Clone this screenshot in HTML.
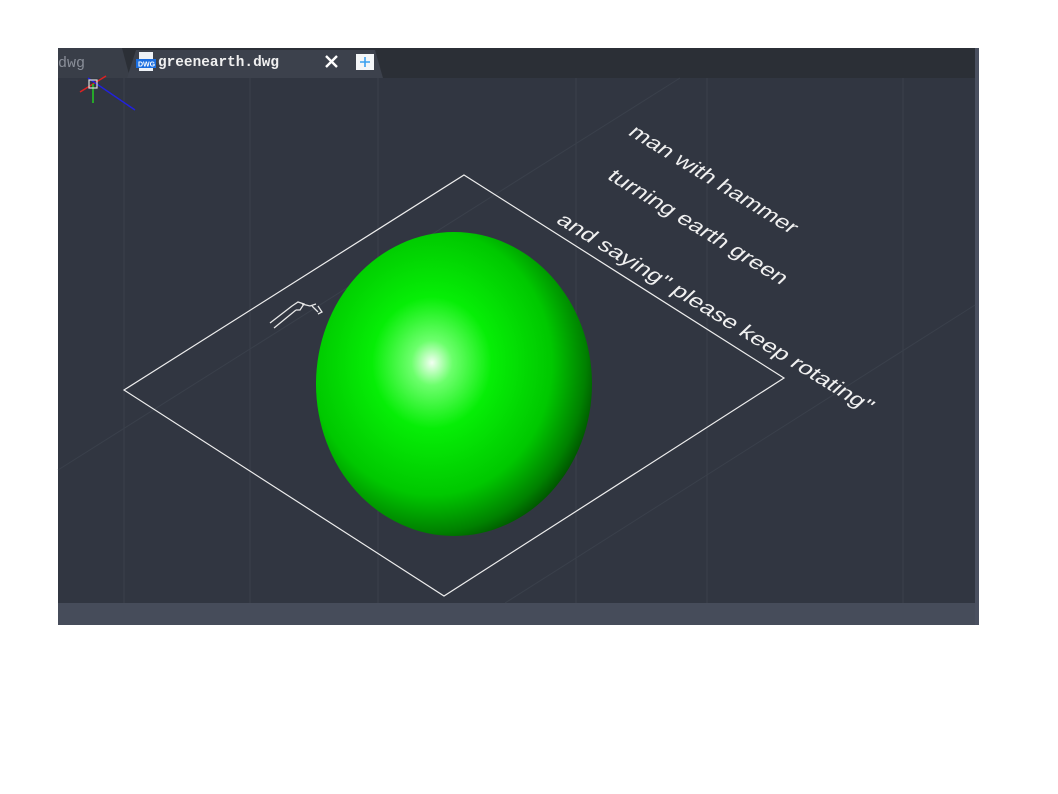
<!DOCTYPE html>
<html><head><meta charset="utf-8"><style>
html,body{margin:0;padding:0;background:#fff;width:1058px;height:794px;overflow:hidden}
svg{display:block}
</style></head><body>
<svg width="1058" height="794" xmlns="http://www.w3.org/2000/svg">
<defs>
<radialGradient id="g" cx="0.42" cy="0.43" r="0.62" fx="0.42" fy="0.43">
<stop offset="0" stop-color="#f2fff2"/>
<stop offset="0.12" stop-color="#6cff6c"/>
<stop offset="0.35" stop-color="#06ee06"/>
<stop offset="0.7" stop-color="#00c800"/>
<stop offset="0.9" stop-color="#008000"/>
<stop offset="1" stop-color="#004a00"/>
</radialGradient>
</defs>
<rect x="58" y="48" width="921" height="577" fill="#313641"/>
<rect x="975" y="48" width="4" height="577" fill="#4a5060"/>
<rect x="58" y="48" width="917" height="30" fill="#2b2f36"/>
<path d="M58 48 H122 L130 78 H58Z" fill="#393e48"/>
<path d="M127 78 L136 50 H375 L383 78Z" fill="#3c414c"/>
<text x="58" y="67" font-family="Liberation Mono,monospace" font-size="15" fill="#8a8f99">dwg</text>
<rect x="139" y="52" width="14" height="19" fill="#eef2f7"/>
<rect x="136" y="59" width="20" height="9" fill="#1a6ee0"/>
<text x="138" y="66.5" font-family="Liberation Sans,sans-serif" font-size="7" font-weight="bold" fill="#fff">DWG</text>
<text x="158" y="66" font-family="Liberation Mono,monospace" font-size="15" font-weight="bold" fill="#f0f0f0" textLength="121" lengthAdjust="spacingAndGlyphs">greenearth.dwg</text>
<path d="M326 56 L337 67 M337 56 L326 67" stroke="#fff" stroke-width="2.4"/>
<rect x="356" y="54" width="18" height="16" fill="#f4f6f8"/>
<path d="M365 57 V67 M360 62 H370" stroke="#3aa0f0" stroke-width="1.6"/>
<g stroke="#3a404b" stroke-width="1">
<line x1="124" y1="78" x2="124" y2="603"/><line x1="250" y1="78" x2="250" y2="603"/>
<line x1="378" y1="78" x2="378" y2="603"/><line x1="576" y1="78" x2="576" y2="603"/>
<line x1="707" y1="78" x2="707" y2="603"/><line x1="903" y1="78" x2="903" y2="603"/>
<line x1="58" y1="470" x2="680" y2="78"/><line x1="505" y1="603" x2="975" y2="305"/>
</g>
<rect x="58" y="603" width="917" height="22" fill="#464c5a"/>
<line x1="80" y1="92" x2="106" y2="76" stroke="#d22" stroke-width="1.5"/>
<line x1="93" y1="84" x2="93" y2="103" stroke="#2c2" stroke-width="1.5"/>
<line x1="88" y1="78" x2="135" y2="110" stroke="#22d" stroke-width="1.5"/>
<rect x="89" y="80" width="8" height="8" fill="none" stroke="#ddd" stroke-width="1.2"/>
<polygon points="464,175 784,378 444,596 124,390" fill="none" stroke="#eee" stroke-width="1.2"/>
<ellipse cx="454" cy="384" rx="138" ry="152" fill="url(#g)"/>
<g stroke="#e8e8e8" stroke-width="1.3" fill="none">
<path d="M270 323 L292 306 M274 328 L296 310 M292 306 L298 302 L304 304 L300 310 L296 310 M302 304 L310 306 L316 304 M312 306 L318 312 M318 306 L322 312 L318 314"/>
</g>
<g font-family="Liberation Sans,sans-serif" font-size="20" fill="#f0f0f0">
<text transform="translate(627,134) rotate(31.5) skewX(-15)" textLength="192" lengthAdjust="spacingAndGlyphs">man with hammer</text>
<text transform="translate(606,178) rotate(31.5) skewX(-15)" textLength="205" lengthAdjust="spacingAndGlyphs">turning earth green</text>
<text transform="translate(555,222) rotate(31.5) skewX(-15)" textLength="365" lengthAdjust="spacingAndGlyphs">and saying" please keep rotating"</text>
</g>
</svg>
</body></html>
